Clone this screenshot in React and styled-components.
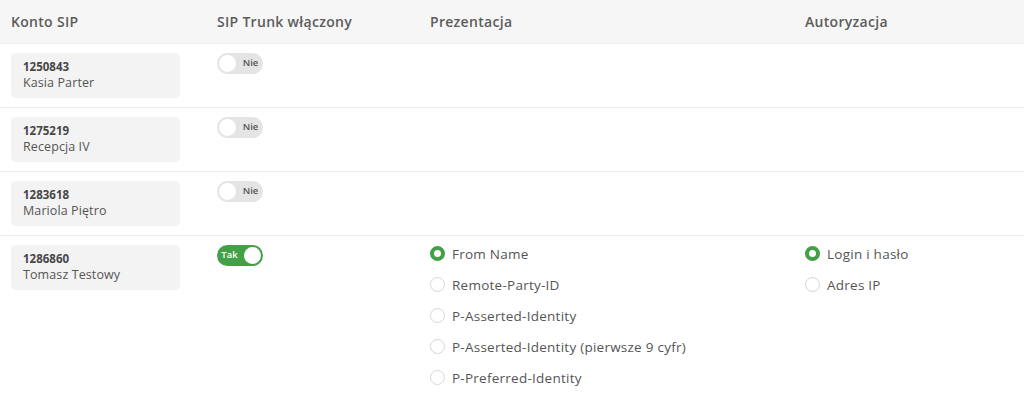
import styled, { createGlobalStyle } from "styled-components";

const Global = createGlobalStyle`
    body { margin: 0; background: #fff; font-family: "Open Sans", "Liberation Sans", sans-serif; color: #555; }
`;

const Table = styled.div`
    width: 1024px;
`;

const Row = styled.div`
    display: grid;
    grid-template-columns: 206px 213px 375px 1fr;
    border-bottom: 1px solid #efefef;
    background: ${p => (p.$head ? "#f6f6f6" : "#fff")};
    height: ${p => (p.$head ? "43px" : "auto")};
    align-items: ${p => (p.$head ? "center" : "start")};
    padding: ${p => (p.$head ? "0" : "9px 0 9px")};
    &:last-child { padding-bottom: 20px; }
`;

const Th = styled.div`
    padding-left: 11px;
    font-size: 14px; font-weight: 600; color: #5c5c5c; letter-spacing: 0.3px;
`;

const Cell = styled.div`
    padding-left: 11px;
`;

const Card = styled.div`
    width: 169px; height: 45px; box-sizing: border-box;
    background: #f3f3f3; border-radius: 5px;
    padding: 6px 12px;
    display: flex; flex-direction: column;
`;

const Id = styled.div`
    font-size: 11.5px; font-weight: 700; color: #474747; line-height: 15px;
`;

const Name = styled.div`
    font-size: 12.5px; color: #555; line-height: 17px; letter-spacing: 0.1px;
`;

const Toggle = styled.div`
    width: 46px; height: 21px; border-radius: 11px; box-sizing: border-box;
    background: ${p => (p.$on ? "#43a047" : "#e4e4e4")};
    display: flex; align-items: center;
    flex-direction: ${p => (p.$on ? "row-reverse" : "row")};
    padding: 0 2px; gap: 4px;
`;

const Knob = styled.div`
    width: 17px; height: 17px; border-radius: 50%; background: #fff; flex: none;
`;

const ToggleText = styled.span`
    font-size: 9.5px; font-weight: 600; color: ${p => (p.$on ? "#fff" : "#555")};
    flex: 1; text-align: center; margin-top: -3px;
`;

const Radios = styled.div`
    display: flex; flex-direction: column; gap: 12px;
    padding-left: 11px; margin-top: -1px;
`;

const RadioRow = styled.label`
    display: flex; align-items: center; gap: 7px;
    font-size: 13.5px; color: #555; height: 19px; letter-spacing: 0.25px;
`;

const Dot = styled.span`
    width: 15px; height: 15px; border-radius: 50%; box-sizing: border-box; flex: none;
    border: ${p => (p.$on ? "4.5px solid #43a047" : "1px solid #d6d6d6")};
    background: #fff;
`;

const accounts = [
    { id: "1250843", name: "Kasia Parter", on: false },
    { id: "1275219", name: "Recepcja IV", on: false },
    { id: "1283618", name: "Mariola Piętro", on: false },
    { id: "1286860", name: "Tomasz Testowy", on: true },
];

const presentations = ["From Name", "Remote-Party-ID", "P-Asserted-Identity", "P-Asserted-Identity (pierwsze 9 cyfr)", "P-Preferred-Identity"];
const auths = ["Login i hasło", "Adres IP"];

function RadioGroup({ items, selected }) {
    return (
        <Radios>
            {items.map(label => (
                <RadioRow key={label}>
                    <Dot $on={label === selected} />
                    {label}
                </RadioRow>
            ))}
        </Radios>
    );
}

export default function App() {
    return (
        <Table>
            <Global />
            <Row $head>
                <Th>Konto SIP</Th>
                <Th>SIP Trunk włączony</Th>
                <Th>Prezentacja</Th>
                <Th>Autoryzacja</Th>
            </Row>
            {accounts.map(a => (
                <Row key={a.id}>
                    <Cell>
                        <Card>
                            <Id>{a.id}</Id>
                            <Name>{a.name}</Name>
                        </Card>
                    </Cell>
                    <Cell>
                        <Toggle $on={a.on}>
                            <Knob />
                            <ToggleText $on={a.on}>{a.on ? "Tak" : "Nie"}</ToggleText>
                        </Toggle>
                    </Cell>
                    {a.on ? <RadioGroup items={presentations} selected="From Name" /> : <div />}
                    {a.on ? <RadioGroup items={auths} selected="Login i hasło" /> : <div />}
                </Row>
            ))}
        </Table>
    );
}
